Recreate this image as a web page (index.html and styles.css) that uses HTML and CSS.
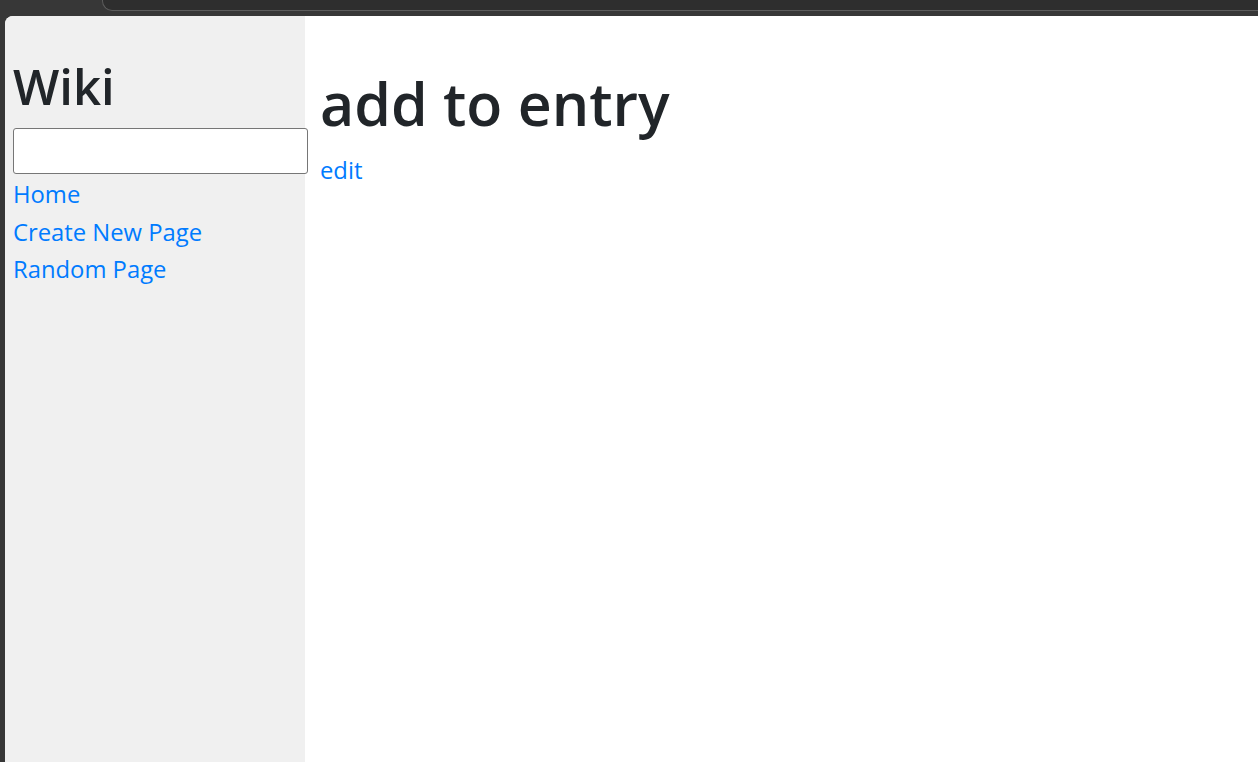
FILE: index.html
```html
<!DOCTYPE html>
<html lang="en">
<head>
<meta charset="utf-8">
<title>add to entry</title>
<link rel="stylesheet" href="styles.css">
</head>
<body>
<div class="chrome"><div class="tabline"></div></div>
<div class="viewport">
  <div class="sidebar">
    <h2 class="brand">Wiki</h2>
    <form class="search-form"><input class="search" type="text" name="q"></form>
    <div class="nav-item"><a href="#">Home</a></div>
    <div class="nav-item"><a href="#">Create New Page</a></div>
    <div class="nav-item"><a href="#">Random Page</a></div>
  </div>
  <div class="main">
    <h1 class="title">add to entry</h1>
    <div class="nav-item"><a href="#">edit</a></div>
  </div>
</div>
</body>
</html>
```
FILE: styles.css
```css
html, body {
  margin: 0;
  height: 100%;
}
body {
  background: #373737;
  display: flex;
  flex-direction: column;
  font-family: "Open Sans", "Noto Sans", sans-serif;
  color: #212529;
  overflow: hidden;
}
.chrome {
  height: 16px;
  flex: none;
}
.tabline {
  margin-left: 102px;
  height: 10px;
  background: #2e2e2e;
  border-left: 1px solid #5c5c5c;
  border-bottom: 1px solid #5c5c5c;
  border-bottom-left-radius: 10px;
}
.viewport {
  flex: 1;
  margin-left: 5px;
  background: #ffffff;
  border-top-left-radius: 8px;
  overflow: hidden;
  display: flex;
}
.sidebar {
  width: 292px;
  flex: none;
  background: #f0f0f0;
  padding: 40px 0 0 8px;
}
.brand {
  margin: 0 0 12px;
  font-size: 49px;
  font-weight: 600;
  line-height: 60px;
}
.search {
  box-sizing: border-box;
  display: block;
  width: 295px;
  height: 46px;
  margin: 0 0 2px;
  border: 1px solid #767676;
  border-radius: 3px;
  background: #fff;
  font-size: 23px;
}
.nav-item {
  font-size: 23.8px;
  line-height: 37.5px;
}
.nav-item a {
  color: #007bff;
  text-decoration: none;
}
.main {
  flex: 1;
  padding: 0 15px;
}
.title {
  margin: 0 0 11px;
  padding-top: 50px;
  font-size: 59px;
  font-weight: 600;
  line-height: 75px;
}
```
